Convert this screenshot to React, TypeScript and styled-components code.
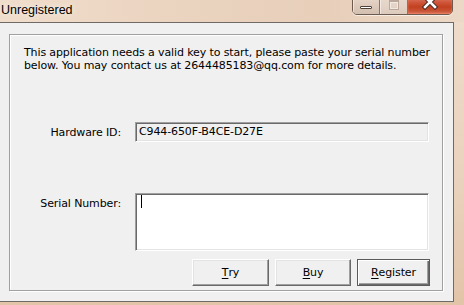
import styled, { createGlobalStyle } from "styled-components";

const GlobalStyle = createGlobalStyle`
  html, body {
    margin: 0;
    padding: 0;
  }
  body {
    width: 464px;
    height: 305px;
    overflow: hidden;
    font-family: "DejaVu Sans", Verdana, sans-serif;
    letter-spacing: -0.12px;
    color: #000;
  }
`;

const buttons = [
  { key: "try", hot: "T", rest: "ry", width: 77 },
  { key: "buy", hot: "B", rest: "uy", width: 76 },
  { key: "register", hot: "R", rest: "egister", width: 73, primary: true },
];

export default function App() {
  return (
    <>
      <GlobalStyle />
      <Window>
        <TitleBar>
          <Title>Unregistered</Title>
          <Controls>
            <CaptionButton $width={27}>
              <MinGlyph />
            </CaptionButton>
            <CaptionButton $width={28} $disabled>
              <MaxGlyph />
            </CaptionButton>
            <CloseButton>
              <svg width="20" height="16" viewBox="0 0 20 16">
                <path
                  d="M5 3 L15 13 M15 3 L5 13"
                  stroke="#4a2a22"
                  strokeWidth="4.5"
                  strokeLinecap="square"
                />
                <path
                  d="M5 3 L15 13 M15 3 L5 13"
                  stroke="#fff"
                  strokeWidth="2.5"
                  strokeLinecap="square"
                />
              </svg>
            </CloseButton>
          </Controls>
        </TitleBar>
        <Client>
          <GroupBox>
            <Intro>
              This application needs a valid key to start, please paste your serial number
              <br />
              below. You may contact us at 2644485183@qq.com for more details.
            </Intro>
            <FieldRow $top={50}>
              <Label>Hardware ID:</Label>
              <ReadOnlyField>C944-650F-B4CE-D27E</ReadOnlyField>
            </FieldRow>
            <FieldRow $top={51}>
              <Label $top>Serial Number:</Label>
              <SerialBox>
                <Caret />
              </SerialBox>
            </FieldRow>
            <ButtonRow>
              {buttons.map((b) => (
                <DialogButton key={b.key} $width={b.width} $primary={b.primary}>
                  <u>{b.hot}</u>
                  {b.rest}
                </DialogButton>
              ))}
            </ButtonRow>
          </GroupBox>
        </Client>
      </Window>
    </>
  );
}

const Window = styled.div`
  width: 464px;
  height: 305px;
  display: flex;
  flex-direction: column;
  background: linear-gradient(180deg, #efdccb 0%, #e9d2bd 60%, #e2c4a8 100%);
`;

const TitleBar = styled.div`
  height: 22px;
  flex-shrink: 0;
  display: flex;
  justify-content: space-between;
  align-items: flex-start;
  padding-right: 11px;
  overflow: hidden;
  box-sizing: border-box;
  background: linear-gradient(90deg, #f0ddcb 0%, #ead3bf 40%, #e7cfba 70%, #ecd8c6 100%);
`;

const Title = styled.div`
  margin: 3px 0 0 1px;
  font-family: "Liberation Sans", Arial, sans-serif;
  font-size: 12.5px;
  letter-spacing: 0;
  line-height: 14px;
  color: #000;
  text-shadow: 0 0 6px rgba(255, 255, 255, 0.9);
`;

const Controls = styled.div`
  display: flex;
  margin-top: -7px;
  height: 20px;
  border: 1px solid #6e5a4e;
  border-radius: 0 0 5px 5px;
  overflow: hidden;
  box-shadow: 0 1px 0 rgba(255, 255, 255, 0.6);
`;

const CaptionButton = styled.div<{ $width: number; $disabled?: boolean }>`
  width: ${(p) => p.$width}px;
  height: 20px;
  box-sizing: border-box;
  display: flex;
  justify-content: center;
  align-items: flex-start;
  border-right: 1px solid #8a7568;
  background: ${(p) =>
    p.$disabled
      ? "linear-gradient(180deg, #eadcd1 0%, #e4d3c6 60%, #dccabd 100%)"
      : "linear-gradient(180deg, #ebdcd0 0%, #dfcbbc 55%, #d3bfb0 100%)"};
  box-shadow: inset 1px 0 0 rgba(255, 255, 255, 0.5);
`;

const MinGlyph = styled.div`
  width: 10px;
  height: 1px;
  margin-top: 12px;
  background: #fff;
  border: 1px solid #4f4038;
  border-radius: 1px;
`;

const MaxGlyph = styled.div`
  width: 8px;
  height: 7px;
  margin-top: 6px;
  border: 1px solid #bca89a;
  border-top-width: 2px;
  box-shadow: inset 0 0 0 1px rgba(255, 255, 255, 0.5);
`;

const CloseButton = styled.div`
  width: 44px;
  height: 20px;
  display: flex;
  justify-content: center;
  align-items: flex-start;
  background: linear-gradient(180deg, #e39a85 0%, #d0583c 40%, #c2401f 65%, #cf6347 100%);
  box-shadow: inset 0 -1px 2px rgba(255, 160, 130, 0.6);
`;

const Client = styled.div`
  width: 454px;
  height: 280px;
  flex-shrink: 0;
  box-sizing: border-box;
  background: #f0f0f0;
  border-top: 1px solid #6f6a66;
  border-right: 1px solid #6f6a66;
  border-bottom: 1px solid #6f6a66;
  padding: 11px 0 0 9px;
`;

const GroupBox = styled.div`
  width: 434px;
  height: 257px;
  box-sizing: border-box;
  border: 1px solid #a0a0a0;
  box-shadow: inset 1px 1px 0 #fff, 1px 1px 0 #fff;
  padding: 11px 13px 0 14px;
  display: flex;
  flex-direction: column;
`;

const Intro = styled.p`
  margin: 0;
  font-size: 11px;
  line-height: 13px;
  white-space: nowrap;
`;

const FieldRow = styled.div<{ $top: number }>`
  display: grid;
  grid-template-columns: 97px 294px;
  column-gap: 14px;
  margin-top: ${(p) => p.$top}px;
`;

const Label = styled.div<{ $top?: boolean }>`
  font-size: 11px;
  line-height: 13px;
  text-align: right;
  align-self: ${(p) => (p.$top ? "start" : "center")};
  padding-top: ${(p) => (p.$top ? "4px" : "0")};
`;

const sunken = `
  box-sizing: border-box;
  border: 1px solid;
  border-color: #a0a0a0 #ffffff #ffffff #a0a0a0;
  box-shadow: inset 1px 1px 0 #696969, inset -1px -1px 0 #e3e3e3;
`;

const ReadOnlyField = styled.div`
  ${sunken}
  height: 20px;
  background: #f0f0f0;
  padding: 0 0 0 3px;
  font-size: 11px;
  line-height: 18px;
`;

const SerialBox = styled.div`
  ${sunken}
  height: 58px;
  background: #fff;
  padding: 1px 0 0 5px;
`;

const Caret = styled.div`
  width: 1px;
  height: 13px;
  background: #000;
`;

const ButtonRow = styled.div`
  display: flex;
  justify-content: flex-end;
  gap: 6px;
  margin-top: 8px;
  margin-right: -1px;
`;

const DialogButton = styled.div<{ $width: number; $primary?: boolean }>`
  width: ${(p) => p.$width}px;
  height: 27px;
  box-sizing: border-box;
  display: flex;
  justify-content: center;
  align-items: center;
  font-size: 11px;
  background: #f0f0f0;
  border: 1px solid;
  border-color: ${(p) => (p.$primary ? "#5a5a5a" : "#ffffff #696969 #696969 #ffffff")};
  box-shadow: ${(p) =>
    p.$primary
      ? "inset 1px 1px 0 #ffffff, inset -1px -1px 0 #696969, inset -2px -2px 0 #a0a0a0"
      : "inset -1px -1px 0 #a0a0a0, inset 1px 1px 0 #e3e3e3"};

  u {
    text-underline-offset: 2px;
  }
`;
